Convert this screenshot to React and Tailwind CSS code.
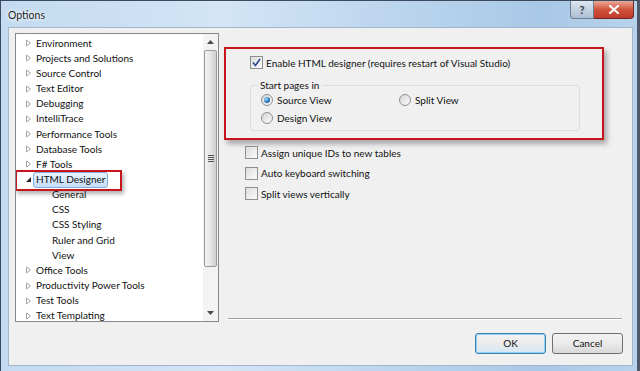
import React from 'react';

const treeItems = [
  { label: 'Environment', level: 0 },
  { label: 'Projects and Solutions', level: 0 },
  { label: 'Source Control', level: 0 },
  { label: 'Text Editor', level: 0 },
  { label: 'Debugging', level: 0 },
  { label: 'IntelliTrace', level: 0 },
  { label: 'Performance Tools', level: 0 },
  { label: 'Database Tools', level: 0 },
  { label: 'F# Tools', level: 0 },
  { label: 'HTML Designer', level: 0, expanded: true, selected: true },
  { label: 'General', level: 1 },
  { label: 'CSS', level: 1 },
  { label: 'CSS Styling', level: 1 },
  { label: 'Ruler and Grid', level: 1 },
  { label: 'View', level: 1 },
  { label: 'Office Tools', level: 0 },
  { label: 'Productivity Power Tools', level: 0 },
  { label: 'Test Tools', level: 0 },
  { label: 'Text Templating', level: 0 },
];

const font = { fontFamily: 'Lato, "Open Sans", sans-serif' };

const Arrow = ({ expanded }) =>
  expanded ? (
    <svg width="7" height="7" viewBox="0 0 7 7" className="shrink-0">
      <path d="M6 1 L6 6 L1 6 Z" fill="#262626" />
    </svg>
  ) : (
    <svg width="7" height="8" viewBox="0 0 7 8" className="shrink-0">
      <path d="M1.5 1 L5.5 4 L1.5 7 Z" fill="none" stroke="#a6a6a6" strokeWidth="1" />
    </svg>
  );

const Checkbox = ({ checked }) => (
  <div className="w-[13px] h-[13px] shrink-0 border border-[#8f8f8f] bg-gradient-to-br from-[#dcdcdc] to-[#fbfbfb] flex items-center justify-center">
    {checked && (
      <svg width="9" height="9" viewBox="0 0 9 9">
        <path d="M1 4.5 L3.5 7.5 L8 1" fill="none" stroke="#2b4a8c" strokeWidth="1.6" />
      </svg>
    )}
  </div>
);

const Radio = ({ checked }) => (
  <div className="w-[12px] h-[12px] shrink-0 rounded-full border border-[#8f8f8f] bg-gradient-to-br from-[#d6d6d6] to-[#fbfbfb] flex items-center justify-center">
    {checked && (
      <div className="w-[6px] h-[6px] rounded-full bg-[radial-gradient(circle_at_35%_35%,#a9dcff,#1c6fb8_60%,#0d3f78)]" />
    )}
  </div>
);

const ScrollArrow = ({ down }) => (
  <svg width="7" height="4" viewBox="0 0 7 4">
    <path d={down ? 'M0 0 L7 0 L3.5 4 Z' : 'M0 4 L7 4 L3.5 0 Z'} fill="#4d4d4d" />
  </svg>
);

export default function App() {
  return (
    <div
      className="w-[640px] h-[371px] overflow-hidden flex flex-col border-l border-t border-[#3b4a5c] border-r-[3px] border-r-[#4d5968] bg-[linear-gradient(90deg,#c3daf0_0%,#d3e5f6_35%,#bdd6ee_60%,#a9c8e6_85%,#b8d2ec_100%)] text-[#111] text-[10px]"
      style={font}
    >
      {/* title bar */}
      <div className="h-[26px] shrink-0 flex items-start justify-between">
        <div className="pl-[7px] pt-[7px] text-[10.5px] leading-[14px] text-[#1e1e1e] [text-shadow:0_0_6px_#fff,0_0_3px_#fff]">
          Options
        </div>
        <div className="flex mr-[3px]">
          <div className="w-[24px] h-[18px] rounded-bl-[4px] border border-[#6e7f93] border-t-0 bg-gradient-to-b from-[#dfe8f2] via-[#c3d1e0] to-[#aebfd2] flex items-center justify-center text-[11px] font-bold text-[#2e3b4b] leading-none">
            ?
          </div>
          <div className="w-[40px] h-[18px] rounded-br-[4px] border border-[#6b2a24] border-t-0 border-l-0 bg-gradient-to-b from-[#e9a99b] via-[#d0533c] to-[#c0392b] flex items-center justify-center">
            <svg width="10" height="9" viewBox="0 0 10 9">
              <path d="M1 1 L9 8 M9 1 L1 8" stroke="#fff" strokeWidth="2.2" strokeLinecap="round" />
            </svg>
          </div>
        </div>
      </div>

      {/* client area */}
      <div className="ml-[7px] mr-[4px] h-[339px] shrink-0 bg-[#f0f0f0] border border-[#a3b7cc] flex items-start">
        {/* tree view */}
        <div className="ml-[6px] mt-[5px] w-[204px] h-[289px] shrink-0 bg-white border border-[#828790] flex text-[10px]">
          <div className="flex-1 overflow-hidden pt-[1.5px]">
            {treeItems.map((item) => (
              <div key={item.label} className="relative h-[15.17px] leading-[15px] flex items-center whitespace-nowrap">
                {item.level === 0 ? (
                  <>
                    <div className="w-[20px] pl-[9px] flex items-center">
                      <Arrow expanded={item.expanded} />
                    </div>
                    {item.selected ? (
                      <span className="relative leading-[13px]">
                        <span className="absolute -left-[3px] -top-[1px] -right-[3px] -bottom-[2px] rounded-[3px] border border-[#84acdd] bg-gradient-to-b from-[#e9f3fd] to-[#c4ddf8]" />
                        <span className="relative">{item.label}</span>
                      </span>
                    ) : (
                      <span>{item.label}</span>
                    )}
                    {item.selected && (
                      <span className="absolute -left-[1px] -top-[2px] w-[107px] h-[21px] border-2 border-[#c4161c] shadow-[2px_3px_4px_rgba(0,0,0,0.3)]" />
                    )}
                  </>
                ) : (
                  <span className="pl-[36px]">{item.label}</span>
                )}
              </div>
            ))}
          </div>
          {/* scrollbar */}
          <div className="w-[15px] shrink-0 bg-[#f3f3f3] flex flex-col items-center">
            <div className="h-[16px] flex items-center justify-center">
              <ScrollArrow />
            </div>
            <div className="w-[13px] h-[217px] rounded-[2px] border border-[#9a9a9a] bg-gradient-to-r from-[#f4f4f4] via-[#e4e4e4] to-[#cfcfcf] flex items-center justify-center">
              <div className="flex flex-col gap-[1px]">
                <div className="w-[6px] h-[1px] bg-[#555]" />
                <div className="w-[6px] h-[1px] bg-[#555]" />
                <div className="w-[6px] h-[1px] bg-[#555]" />
                <div className="w-[6px] h-[1px] bg-[#555]" />
              </div>
            </div>
            <div className="flex-1" />
            <div className="h-[16px] flex items-center justify-center">
              <ScrollArrow down />
            </div>
          </div>
        </div>

        {/* right panel */}
        <div className="flex-1 h-full flex flex-col text-[10px]">
          <div className="ml-[5px] mt-[19px] w-[380px] h-[93px] border-2 border-[#c4161c] shadow-[3px_4px_5px_rgba(0,0,0,0.3)] pl-[24px] pt-[7px]">
            <div className="flex items-center gap-[2px] h-[13px]">
              <Checkbox checked />
              <span className="ml-[1px] leading-none">Enable HTML designer (requires restart of Visual Studio)</span>
            </div>
            <fieldset className="mt-[9px] w-[330px] h-[53px] border border-[#d5dfe5] rounded-[3px] pl-[10px] pr-0 pt-0">
              <legend className="ml-[-4px] px-[3px] leading-[14px]">Start pages in</legend>
              <div className="grid grid-cols-[138px_1fr] gap-y-[6px] mt-[2px]">
                <div className="flex items-center gap-[4px] h-[12px]">
                  <Radio checked />
                  <span className="leading-none">Source View</span>
                </div>
                <div className="flex items-center gap-[4px] h-[12px]">
                  <Radio />
                  <span className="leading-none">Split View</span>
                </div>
                <div className="flex items-center gap-[4px] h-[12px]">
                  <Radio />
                  <span className="leading-none">Design View</span>
                </div>
              </div>
            </fieldset>
          </div>

          <div className="ml-[26px] mt-[6px] flex flex-col gap-[7.5px]">
            {['Assign unique IDs to new tables', 'Auto keyboard switching', 'Split views vertically'].map((t) => (
              <div key={t} className="flex items-center gap-[3px] h-[13px]">
                <Checkbox />
                <span className="leading-none">{t}</span>
              </div>
            ))}
          </div>

          <div className="mt-auto ml-[9px] mr-[10px] h-[2px] border-t border-[#a0a0a0] border-b border-b-white" />
          <div className="flex justify-end gap-[6px] mr-[9px] mt-[13px] mb-[11px]">
            <button className="w-[71px] h-[21px] rounded-[3px] border border-[#3c7fb1] bg-gradient-to-b from-[#f2f2f2] via-[#ebebeb] to-[#d4e8f7] text-[10px] shadow-[inset_0_0_0_1px_#8fd0f4]">
              OK
            </button>
            <button className="w-[71px] h-[21px] rounded-[3px] border border-[#707070] bg-gradient-to-b from-[#f2f2f2] via-[#ebebeb] to-[#d8d8d8] text-[10px]">
              Cancel
            </button>
          </div>
        </div>
      </div>
      <div className="flex-1" />
    </div>
  );
}
